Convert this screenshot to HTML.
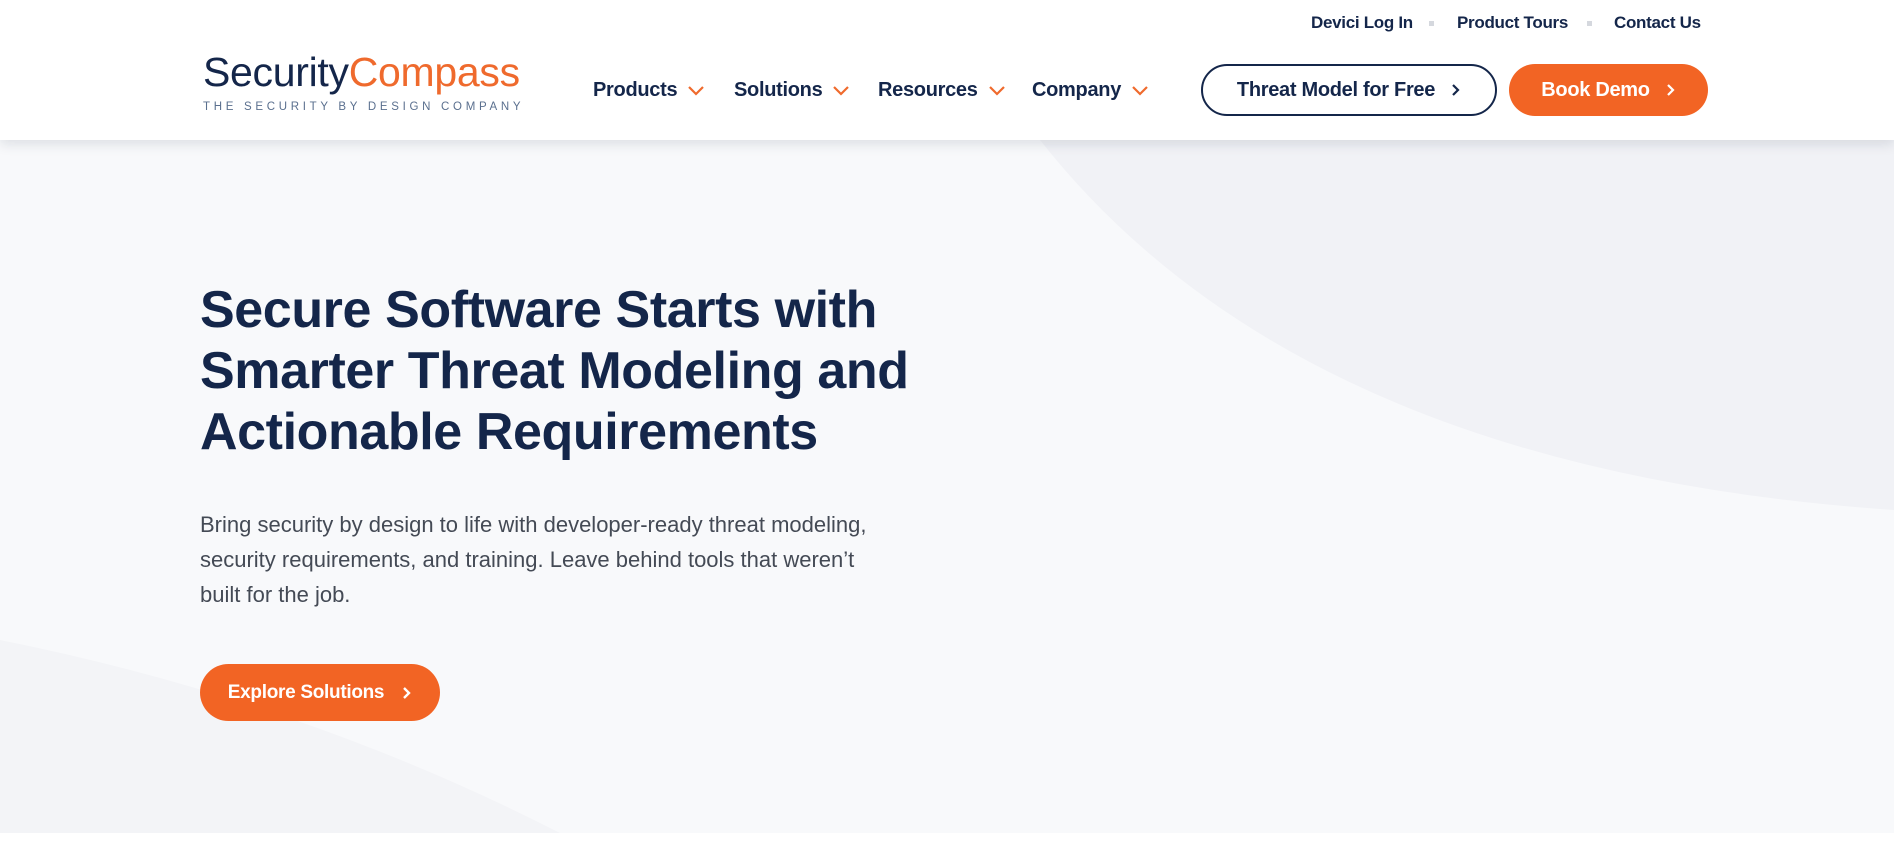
<!DOCTYPE html>
<html><head><meta charset="utf-8"><style>
*{margin:0;padding:0;box-sizing:border-box}
body{width:1894px;height:861px;overflow:hidden;background:#fff;font-family:"Liberation Sans",Arial,sans-serif;color:#14264a;position:relative}
.hero{position:absolute;left:0;top:140px;width:1894px;height:693px;background:#f8f9fb;overflow:hidden}
header{position:absolute;left:0;top:0;width:1894px;height:140px;background:#fff;box-shadow:0 4px 12px rgba(20,30,60,.12);z-index:2}
.top{position:absolute;top:13px;font-size:17px;font-weight:bold;color:#14264a;letter-spacing:-0.3px}
.dot{position:absolute;top:21px;width:5px;height:5px;background:#d5d8de}
.logo{position:absolute;left:203px;top:52px;font-size:41px;letter-spacing:-0.3px;line-height:1}
.logo .a{color:#14264a}.logo .b{color:#ef6a2d}
.tag{position:absolute;left:203px;top:101px;font-size:11.5px;letter-spacing:3.7px;color:#5a6f8e;white-space:nowrap}
.nav{position:absolute;top:79px;font-size:20px;font-weight:bold;color:#14264a;white-space:nowrap;letter-spacing:-0.3px}
.nav svg{vertical-align:middle;margin-left:10px}
.btn{position:absolute;border-radius:30px;font-size:20px;font-weight:bold;display:flex;align-items:center;justify-content:center;white-space:nowrap;letter-spacing:-0.3px}
h1{position:absolute;left:200px;top:280px;font-size:52px;line-height:61px;font-weight:bold;color:#14264a;letter-spacing:-0.4px;z-index:1}
p{position:absolute;left:200px;top:507px;width:690px;font-size:22px;line-height:35px;color:#444a55;z-index:1}
</style></head><body>
<div class="hero">
<svg width="1894" height="693" style="position:absolute;left:0;top:0">
<path d="M1040 0 Q1300 330 1894 370 L1894 0 Z" fill="#f1f2f6"/>
<path d="M0 500 Q300 560 560 693 L0 693 Z" fill="#f3f4f7"/>
</svg>
</div>
<header>
<div class="top" style="left:1311px">Devici Log In</div>
<div class="dot" style="left:1429px"></div>
<div class="top" style="left:1457px">Product Tours</div>
<div class="dot" style="left:1587px"></div>
<div class="top" style="left:1614px">Contact Us</div>
<div class="logo"><span class="a">Security</span><span class="b">Compass</span></div>
<div class="tag">THE SECURITY BY DESIGN COMPANY</div>
<div class="nav" style="left:593px">Products<svg width="18" height="11"><path d="M2 2l7 7 7-7" stroke="#ef6a2d" stroke-width="2.2" fill="none"/></svg></div>
<div class="nav" style="left:734px">Solutions<svg width="18" height="11"><path d="M2 2l7 7 7-7" stroke="#ef6a2d" stroke-width="2.2" fill="none"/></svg></div>
<div class="nav" style="left:878px">Resources<svg width="18" height="11"><path d="M2 2l7 7 7-7" stroke="#ef6a2d" stroke-width="2.2" fill="none"/></svg></div>
<div class="nav" style="left:1032px">Company<svg width="18" height="11"><path d="M2 2l7 7 7-7" stroke="#ef6a2d" stroke-width="2.2" fill="none"/></svg></div>
<div class="btn" style="left:1201px;top:64px;width:296px;height:52px;border:2px solid #14264a;color:#14264a">Threat Model for Free<svg width="10" height="14" style="margin-left:16px"><path d="M2 2l5 5-5 5" stroke="#14264a" stroke-width="2.2" fill="none"/></svg></div>
<div class="btn" style="left:1509px;top:64px;width:199px;height:52px;background:#f26424;color:#fff">Book Demo<svg width="10" height="14" style="margin-left:16px"><path d="M2 2l5 5-5 5" stroke="#fff" stroke-width="2.2" fill="none"/></svg></div>
</header>
<h1>Secure Software Starts with<br>Smarter Threat Modeling and<br>Actionable Requirements</h1>
<p>Bring security by design to life with developer-ready threat modeling, security requirements, and training. Leave behind tools that weren’t built for the job.</p>
<div class="btn" style="left:200px;top:664px;width:240px;height:57px;background:#f26424;color:#fff;font-size:19px;z-index:1">Explore Solutions<svg width="10" height="14" style="margin-left:18px"><path d="M2 2l5 5-5 5" stroke="#fff" stroke-width="2.4" fill="none"/></svg></div>
</body></html>
